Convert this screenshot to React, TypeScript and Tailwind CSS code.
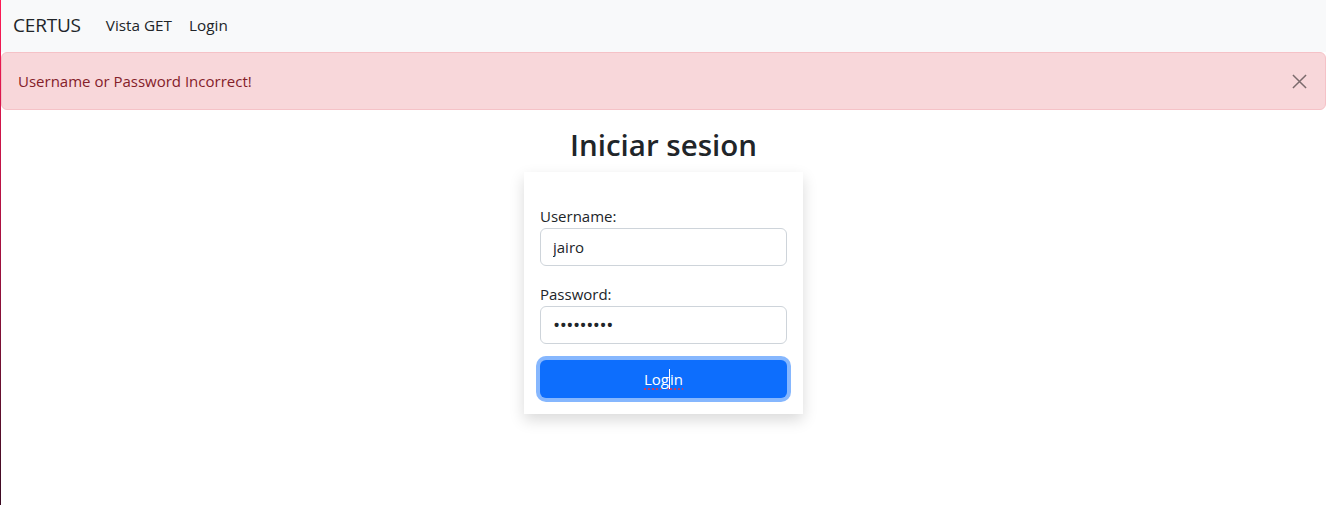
import { useState } from "react";

export default function App() {
  const [user, setUser] = useState("jairo");
  const [pass, setPass] = useState("123456789");

  return (
    <div className="flex min-h-[505px] bg-white font-['Open_Sans',sans-serif] text-[#212529]">
      {/* window edge */}
      <div className="w-px shrink-0 bg-gradient-to-b from-[#ff1a55] via-[#a3103f] to-[#3a0a22]" />

      <div className="flex-1">
        {/* Navbar */}
        <nav className="flex h-[52px] items-center bg-[#f8f9fa] px-3 pb-[2px]">
          <span className="mr-[25px] text-[19px] tracking-[-0.2px]">CERTUS</span>
          <ul className="flex gap-[17px] text-[15.3px]">
            <li>Vista GET</li>
            <li>Login</li>
          </ul>
        </nav>

        {/* Alert */}
        <div className="mb-4 flex h-[58px] items-center justify-between rounded-md border border-[#f5c2c7] bg-[#f8d7da] pl-4 pr-[18px] text-[15px] text-[#842029]">
          <span>Username or Password Incorrect!</span>
          <button className="flex h-4 w-4 items-center justify-center text-black opacity-50">
            <svg viewBox="0 0 16 16" className="h-[15px] w-[15px]" fill="none" stroke="currentColor" strokeWidth="1.6">
              <path d="M1 1l14 14M15 1L1 15" />
            </svg>
          </button>
        </div>

        {/* Login */}
        <div className="flex flex-col items-center">
          <h2 className="mb-2 text-[29.5px] leading-[38px] font-semibold">Iniciar sesion</h2>
          <div className="w-[279px] bg-white p-4 pt-8 shadow-[0_6px_14px_rgba(0,0,0,0.15)]">
            <label className="block text-[15px] leading-6">Username:</label>
            <input
              value={user}
              onChange={(e) => setUser(e.target.value)}
              className="mb-4 block h-[38px] w-full rounded-md border border-[#ced4da] px-3 text-[15px] outline-none"
            />
            <label className="block text-[15px] leading-6">Password:</label>
            <input
              type="password"
              value={pass}
              onChange={(e) => setPass(e.target.value)}
              className="mb-4 block h-[38px] w-full rounded-md border border-[#ced4da] px-3 text-[19px] tracking-[-0.5px] outline-none"
            />
            <button className="block h-[38px] w-full rounded-md bg-[#0d6efd] text-[15px] text-white ring-4 ring-[#86b7fe]">
              <span className="underline decoration-red-500 decoration-dotted underline-offset-4">
                Log<span className="border-l border-white">in</span>
              </span>
            </button>
          </div>
        </div>
      </div>
    </div>
  );
}
